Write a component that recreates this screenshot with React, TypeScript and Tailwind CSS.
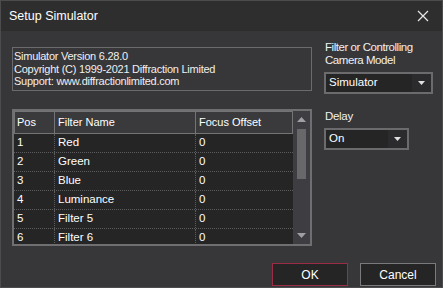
export default function App() {
  const rows = [
    { pos: "1", name: "Red", offset: "0" },
    { pos: "2", name: "Green", offset: "0" },
    { pos: "3", name: "Blue", offset: "0" },
    { pos: "4", name: "Luminance", offset: "0" },
    { pos: "5", name: "Filter 5", offset: "0" },
    { pos: "6", name: "Filter 6", offset: "0" },
  ];

  return (
    <div
      className="w-[443px] h-[288px] bg-[#37373a] border border-[#4c4c4e] flex flex-col text-white overflow-hidden"
      style={{ fontFamily: '"Liberation Sans", Arial, sans-serif' }}
    >
      {/* Title bar */}
      <div className="h-[30px] bg-[#2e2e2e] flex items-center justify-between pl-[8px] pr-[9px] shrink-0">
        <span className="text-[12.5px]">Setup Simulator</span>
        <svg width="12" height="12" viewBox="0 0 12 12" className="mr-[4px]">
          <path d="M1 1 L11 11 M11 1 L1 11" stroke="#e8e8e8" strokeWidth="1.2" />
        </svg>
      </div>

      <div className="flex pl-[11px] pt-[16px]">
        {/* Left column */}
        <div className="w-[300px] flex flex-col">
          <div className="h-[44px] border border-[#6b6b6e] pl-[1px] pt-[2px] text-[11px] leading-[12.7px] tracking-[-0.25px] text-[#f0f0f0]">
            <div>Simulator Version 6.28.0</div>
            <div>Copyright (C) 1999-2021 Diffraction Limited</div>
            <div>Support: www.diffractionlimited.com</div>
          </div>

          <div className="mt-[18px] h-[137px] border-2 border-[#6f6f72] flex overflow-hidden">
            <div className="flex-1 flex flex-col bg-[#252526]">
              <div className="flex h-[23px] bg-[#3a3a3c] text-[11px] shrink-0">
                <div className="w-[41px] border border-[#747477] flex items-center pl-[2px]">Pos</div>
                <div className="w-[141px] border border-[#747477] border-l-0 flex items-center pl-[3px]">Filter Name</div>
                <div className="flex-1 border border-[#747477] border-l-0 flex items-center pl-[3px]">Focus Offset</div>
              </div>
              {rows.map((r) => (
                <div key={r.pos} className="flex h-[19px] shrink-0 text-[11.5px] border-b border-dotted border-[#5c5c5e]">
                  <div className="w-[41px] flex items-center pl-[3px] border-r border-dotted border-[#5c5c5e]">{r.pos}</div>
                  <div className="w-[141px] flex items-center pl-[3px] border-r border-dotted border-[#5c5c5e]">{r.name}</div>
                  <div className="flex-1 flex items-center pl-[3px]">{r.offset}</div>
                </div>
              ))}
            </div>
            {/* Scrollbar */}
            <div className="w-[17px] bg-[#3e3e42] flex flex-col items-center">
              <svg width="9" height="5" viewBox="0 0 9 5" className="mt-[6px]">
                <path d="M4.5 0 L9 5 L0 5 Z" fill="#a0a0a2" />
              </svg>
              <div className="mt-[7px] w-[9px] h-[50px] bg-[#68686b]" />
              <div className="flex-1" />
              <svg width="9" height="5" viewBox="0 0 9 5" className="mb-[6px]">
                <path d="M0 0 L9 0 L4.5 5 Z" fill="#a0a0a2" />
              </svg>
            </div>
          </div>
        </div>

        {/* Right column */}
        <div className="ml-[12px] flex flex-col -mt-[6px]">
          <div className="text-[11.5px] leading-[13px] tracking-[-0.45px] text-[#f0f0f0] pl-[1px]">
            <div>Filter or Controlling</div>
            <div>Camera Model</div>
          </div>
          <div className="mt-[5px] w-[109px] h-[22px] border-2 border-[#6b6b6e] bg-[#252526] flex items-center text-[11.5px]">
            <span className="flex-1 pl-[3px]">Simulator</span>
            <span className="w-[19px] h-full bg-[#2b2b2d] flex items-center justify-center">
              <svg width="7" height="4" viewBox="0 0 7 4">
                <path d="M0 0 L7 0 L3.5 4 Z" fill="#e0e0e0" />
              </svg>
            </span>
          </div>
          <div className="mt-[16px] text-[11.5px] leading-[13px] tracking-[-0.3px] pl-[1px] text-[#f0f0f0]">Delay</div>
          <div className="mt-[5px] w-[85px] h-[22px] border-2 border-[#6b6b6e] bg-[#252526] flex items-center text-[11.5px]">
            <span className="flex-1 pl-[3px]">On</span>
            <span className="w-[19px] h-full bg-[#2b2b2d] flex items-center justify-center">
              <svg width="7" height="4" viewBox="0 0 7 4">
                <path d="M0 0 L7 0 L3.5 4 Z" fill="#e0e0e0" />
              </svg>
            </span>
          </div>
        </div>
      </div>

      {/* Buttons */}
      <div className="flex justify-end gap-[12px] pr-[6px] mt-[17px]">
        <button className="w-[76px] h-[23px] border border-[#9b2c45] bg-[#252526] text-[12px] text-white">OK</button>
        <button className="w-[76px] h-[23px] border border-[#7a7a7c] bg-[#252526] text-[12px] text-white">Cancel</button>
      </div>
    </div>
  );
}
